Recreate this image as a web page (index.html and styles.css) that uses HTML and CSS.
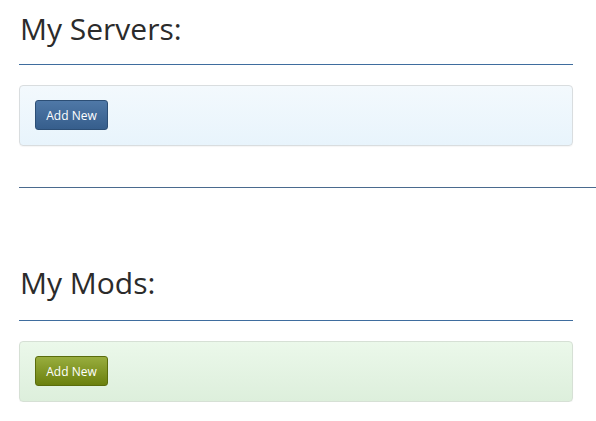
FILE: index.html
```html
<!DOCTYPE html>
<html>
<head>
<meta charset="utf-8">
<link rel="stylesheet" href="styles.css">
</head>
<body>
<div class="page">
  <section class="block">
    <h2 class="title">My Servers:</h2>
    <hr class="rule">
    <div class="well well-blue">
      <button class="btn btn-blue">Add New</button>
    </div>
  </section>
  <hr class="divider">
  <section class="block block-mods">
    <h2 class="title">My Mods:</h2>
    <hr class="rule rule-mods">
    <div class="well well-green">
      <button class="btn btn-green">Add New</button>
    </div>
  </section>
</div>
</body>
</html>
```
FILE: styles.css
```css
html, body {
  margin: 0;
  padding: 0;
  background: #ffffff;
  font-family: "Open Sans", "Liberation Sans", sans-serif;
  overflow: hidden;
}
.page {
  padding-left: 19px;
  width: 554px;
}
.title {
  margin: 12px 0 0 1px;
  font-size: 30px;
  line-height: 33px;
  font-weight: 400;
  color: #2b2b2b;
}
.rule {
  margin: 19px 0 0 0;
  border: 0;
  height: 1px;
  background: #3f6d9e;
}
.rule-mods {
  margin-top: 21px;
}
.well {
  margin-top: 20px;
  border: 1px solid #d9dddf;
  border-radius: 4px;
  padding: 14px 15px 15px;
  display: flex;
  box-shadow: 0 1px 1px rgba(0,0,0,0.04);
}
.well-blue {
  background: linear-gradient(#f3f9fd, #e8f4fc);
}
.well-green {
  background: linear-gradient(#ebf8ea, #ddefdc);
  border-color: #d6e0d5;
}
.btn {
  font-family: "Open Sans", "Liberation Sans", sans-serif;
  font-size: 12px;
  color: #ffffff;
  width: 73px;
  height: 30px;
  padding: 0;
  border-radius: 3px;
  cursor: pointer;
}
.btn-blue {
  background: linear-gradient(#4f78a7, #365e8c);
  border: 1px solid #2c4e75;
}
.btn-green {
  background: linear-gradient(#98ad3e, #6b800e);
  border: 1px solid #5a6c0c;
}
.divider {
  margin: 41px 0 0 0;
  border: 0;
  height: 1px;
  width: 600px;
  background: #4a6a8e;
}
.block-mods .title {
  margin-top: 78px;
}
```
